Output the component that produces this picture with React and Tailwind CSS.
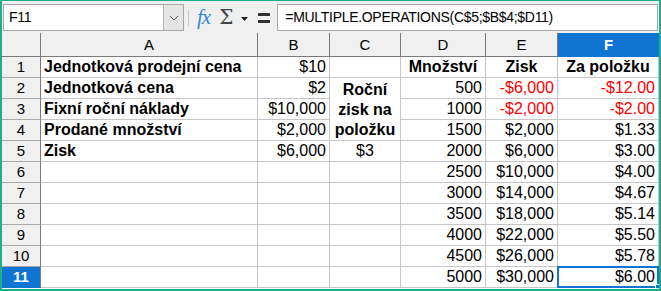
import React from 'react';

// column widths: row header, A..F
const cols = ['A', 'B', 'C', 'D', 'E', 'F'];

const rows = [
  { a: 'Jednotková prodejní cena', b: '$10', c: '', d: 'Množství', e: 'Zisk', f: 'Za položku', head: true },
  { a: 'Jednotková cena', b: '$2', c: 'merged', d: '500', e: '-$6,000', f: '-$12.00', red: true },
  { a: 'Fixní roční náklady', b: '$10,000', d: '1000', e: '-$2,000', f: '-$2.00', red: true },
  { a: 'Prodané množství', b: '$2,000', d: '1500', e: '$2,000', f: '$1.33' },
  { a: 'Zisk', b: '$6,000', c: '$3', d: '2000', e: '$6,000', f: '$3.00' },
  { a: '', b: '', c: '', d: '2500', e: '$10,000', f: '$4.00' },
  { a: '', b: '', c: '', d: '3000', e: '$14,000', f: '$4.67' },
  { a: '', b: '', c: '', d: '3500', e: '$18,000', f: '$5.14' },
  { a: '', b: '', c: '', d: '4000', e: '$22,000', f: '$5.50' },
  { a: '', b: '', c: '', d: '4500', e: '$26,000', f: '$5.78' },
  { a: '', b: '', c: '', d: '5000', e: '$30,000', f: '$6.00' },
];

const cell = 'h-[21px] border-r border-b border-[#c6c6c6] leading-[20px] text-[16px] px-[3px] whitespace-nowrap overflow-hidden';

const Toolbar = () => (
  <div className="h-[32px] bg-[#f0f0f0] flex items-start pt-[3px] pl-[1px] pr-[1px]">
    <div className="w-[181px] h-[27px] border border-[#a8a8a8] bg-white flex">
      <div className="flex-1 pl-[5px] text-[14px] leading-[25px] tracking-[-0.3px] text-black">F11</div>
      <div className="w-[20px] h-full bg-[#e5e5e5] border-l border-[#b4b4b4] flex items-center justify-center">
        <svg width="10" height="6" viewBox="0 0 10 6">
          <path d="M1 1 L5 5 L9 1" fill="none" stroke="#555" strokeWidth="1" />
        </svg>
      </div>
    </div>
    <div className="w-px h-[16px] bg-[#c8c8c8] ml-[4px] mt-[6px]" />
    <div className="ml-[8px] mt-[1px] text-[21px] leading-[24px] italic text-[#2f8ad6] font-['Liberation_Serif'] tracking-[-1px]">fx</div>
    <div className="ml-[9px] mt-[1px] text-[20px] leading-[24px] text-[#444] font-['DejaVu_Serif'] font-extralight">Σ</div>
    <svg className="ml-[8px] mt-[13px]" width="7" height="4" viewBox="0 0 7 4">
      <path d="M0 0 L7 0 L3.5 4 Z" fill="#222" />
    </svg>
    <div className="ml-[10px] mt-[9px] flex flex-col gap-[4px]">
      <div className="w-[12px] h-[3px] bg-[#333]" />
      <div className="w-[12px] h-[3px] bg-[#333]" />
    </div>
    <div className="ml-[7px] flex-1 h-[27px] border border-[#a8a8a8] bg-white pl-[7px] text-[14px] leading-[25px] tracking-[-0.3px] text-black">
      =MULTIPLE.OPERATIONS(C$5;$B$4;$D11)
    </div>
  </div>
);

export default function App() {
  return (
    <div className="w-[661px] h-[291px] overflow-hidden bg-white border-[#1daf88] border-x-2 border-t border-b-2 font-['Liberation_Sans'] text-black">
      <Toolbar />
      <div className="grid grid-cols-[39px_217px_72px_71px_85px_72px_101px]">
        <div className="h-[24px] bg-[#f0f0f0] border-r border-b border-[#7a7a7a]" />
        {cols.map((c) => (
          <div
            key={c}
            className={`h-[24px] border-b text-center text-[15px] leading-[23px] ${
              c === 'F'
                ? 'bg-[#0f74d2] text-white font-bold border-[#0f74d2]'
                : 'bg-[#f0f0f0] border-r border-[#7a7a7a]'
            }`}
          >
            {c}
          </div>
        ))}
        {rows.map((r, i) => {
          const n = i + 1;
          const sel = n === 11;
          return (
            <React.Fragment key={n}>
              <div
                className={`h-[21px] border-r border-b text-center text-[15px] leading-[20px] ${
                  sel
                    ? 'bg-[#0f74d2] text-white font-bold border-r-[#7a7a7a] border-b-[#0f74d2]'
                    : 'bg-[#f0f0f0] border-r-[#7a7a7a] border-b-[#a8a8a8]'
                }`}
              >
                {n}
              </div>
              <div className={`${cell} font-bold`}>{r.a}</div>
              <div className={`${cell} text-right`}>{r.b}</div>
              {r.c === 'merged' ? (
                <div className="row-span-3 border-r border-b border-[#c6c6c6] flex flex-col items-center justify-center font-bold text-[16px] leading-[20px] pt-[2px]">
                  <span>Roční</span>
                  <span>zisk na</span>
                  <span>položku</span>
                </div>
              ) : r.c !== undefined ? (
                <div className={`${cell} text-center`}>{r.c}</div>
              ) : null}
              <div className={`${cell} ${r.head ? 'text-center font-bold' : 'text-right'}`}>{r.d}</div>
              <div className={`${cell} ${r.head ? 'text-center font-bold' : 'text-right'} ${r.red ? 'text-[#ff0000]' : ''}`}>{r.e}</div>
              <div className={`${cell} relative overflow-visible ${r.head ? 'text-center font-bold' : 'text-right'} ${r.red ? 'text-[#ff0000]' : ''}`}>
                {r.f}
                {sel && (
                  <>
                    <div className="absolute left-[-1px] top-[-1px] right-[-1px] bottom-[-1px] border-2 border-[#0f74d2]" />
                    <div className="absolute right-[-2px] bottom-[-2px] w-[5px] h-[5px] bg-[#0f74d2] border border-white" />
                  </>
                )}
              </div>
            </React.Fragment>
          );
        })}
      </div>
    </div>
  );
}
